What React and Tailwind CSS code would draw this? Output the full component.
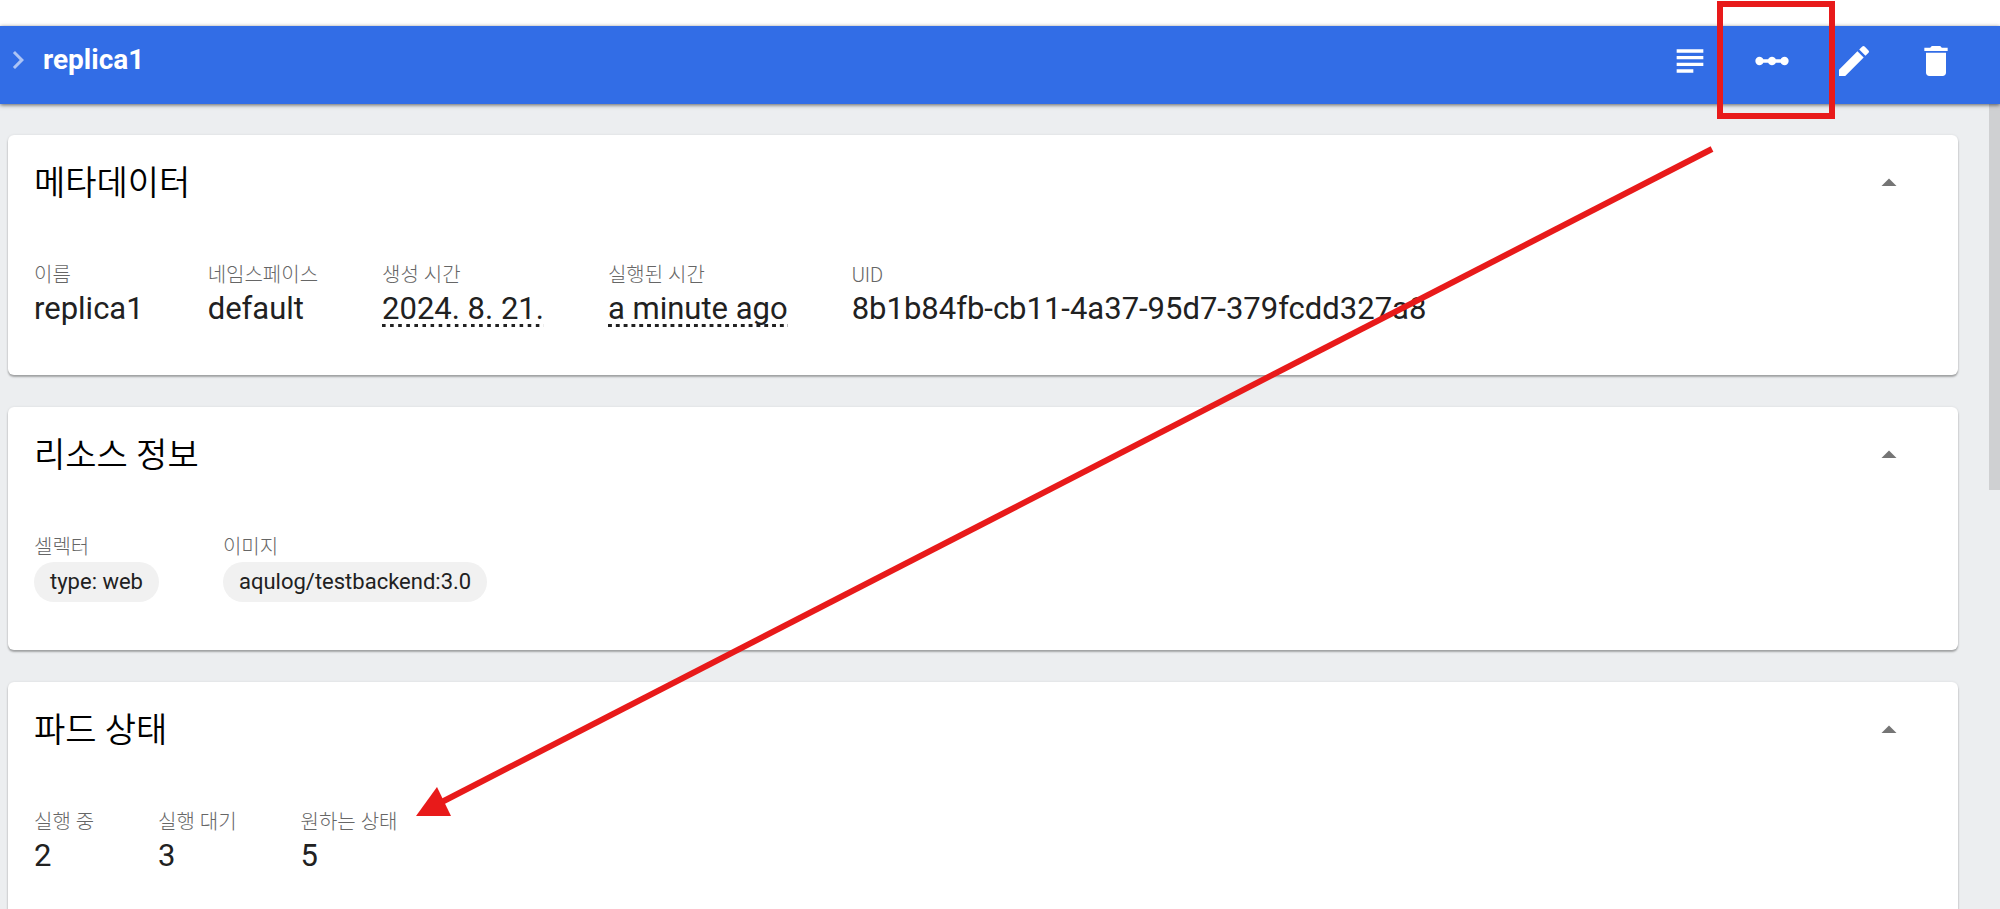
import React, { useState } from 'react';
import {
  MdSubject,
  MdLinearScale,
  MdEdit,
  MdDelete,
  MdChevronRight,
  MdArrowDropUp,
} from 'react-icons/md';

const actions = [
  { label: 'View logs', icon: MdSubject },
  { label: 'Scale resource', icon: MdLinearScale },
  { label: 'Edit resource', icon: MdEdit },
  { label: 'Delete resource', icon: MdDelete },
];

const metadata = [
  { label: '이름', value: 'replica1' },
  { label: '네임스페이스', value: 'default' },
  { label: '생성 시간', value: '2024. 8. 21.', dotted: true },
  { label: '실행된 시간', value: 'a minute ago', dotted: true },
  { label: 'UID', value: '8b1b84fb-cb11-4a37-95d7-379fcdd327a8' },
];

const resourceInfo = [
  { label: '셀렉터', chip: 'type: web' },
  { label: '이미지', chip: 'aqulog/testbackend:3.0' },
];

const podStatus = [
  { label: '실행 중', value: '2' },
  { label: '실행 대기', value: '3' },
  { label: '원하는 상태', value: '5' },
];

function Property({ label, value, chip, dotted }) {
  return (
    <div>
      <dt className="text-[20px] leading-[30px] font-light text-[#666666]">{label}</dt>
      <dd className="flex">
        {chip ? (
          <span className="rounded-full bg-[#f1f1f1] px-4 text-[22px] leading-[40px]">{chip}</span>
        ) : (
          <span
            className={
              dotted
                ? 'bg-[linear-gradient(90deg,#212121_4px,transparent_4px)] bg-[length:8px_3px] bg-bottom-left [background-repeat:round_no-repeat] text-[31px] leading-[37px]'
                : 'text-[31px] leading-[37px]'
            }
          >
            {value}
          </span>
        )}
      </dd>
    </div>
  );
}

function Card({ title, items }) {
  const [open, setOpen] = useState(true);

  return (
    <section className="rounded-md bg-white pr-[51px] pl-[26px] shadow-[0_2px_2px_rgba(0,0,0,0.3),0_0_3px_rgba(0,0,0,0.08)]">
      <div className="flex h-24 items-center justify-between">
        <h2 className="text-[34px] leading-[48px] font-[350] text-black">{title}</h2>
        <button
          type="button"
          aria-label={title}
          aria-expanded={open}
          onClick={() => setOpen(!open)}
          className="text-[#757575]"
        >
          <MdArrowDropUp className="size-9" />
        </button>
      </div>
      {open && (
        <dl className="flex gap-16 pt-[29px] pb-12">
          {items.map((item) => (
            <Property key={item.label} {...item} />
          ))}
        </dl>
      )}
    </section>
  );
}

// Red marker drawn over the page, pointing from the scale button to the pod counts
function Annotation() {
  return (
    <svg
      width="2000"
      height="909"
      viewBox="0 0 2000 909"
      className="pointer-events-none absolute top-0 right-0"
      aria-hidden="true"
    >
      <rect x="1720" y="4" width="112" height="112" fill="none" stroke="#e81a1a" strokeWidth="6" />
      <line x1="1712" y1="149" x2="436" y2="805" stroke="#e81a1a" strokeWidth="6" />
      <polygon points="416,816 437,787 451,816" fill="#e81a1a" />
    </svg>
  );
}

export default function App() {
  return (
    <div
      className="relative h-screen overflow-hidden bg-white pt-[26px] text-[#212121]"
      style={{ fontFamily: 'Roboto, "Noto Sans CJK KR", sans-serif' }}
    >
      <div className="flex h-full flex-col">
        <header className="relative flex h-[78px] shrink-0 items-center justify-between bg-[#326de6] pr-6 text-white shadow-[0_1px_4px_rgba(0,0,0,0.6)]">
          <nav className="flex items-center gap-[7px] pb-[10px]">
            <MdChevronRight className="size-9 text-white/60" />
            <a href="#replica1" className="text-[28px] leading-[36px] font-bold">
              replica1
            </a>
          </nav>
          <div className="flex gap-[2px] pb-2">
            {actions.map(({ label, icon: Icon }) => (
              <button
                key={label}
                type="button"
                aria-label={label}
                className="flex w-20 items-center justify-center"
              >
                <Icon className="size-[40px]" />
              </button>
            ))}
          </div>
        </header>
        <div className="flex min-h-0 flex-1 bg-[#eceef0]">
          <main className="flex min-w-0 flex-1 flex-col gap-8 pt-[31px] pr-[31px] pl-2">
            <Card title="메타데이터" items={metadata} />
            <Card title="리소스 정보" items={resourceInfo} />
            <Card title="파드 상태" items={podStatus} />
          </main>
          <div className="w-[11px]">
            <div className="h-12/25 bg-[#cfd0d2]" />
          </div>
        </div>
      </div>
      <Annotation />
    </div>
  );
}
